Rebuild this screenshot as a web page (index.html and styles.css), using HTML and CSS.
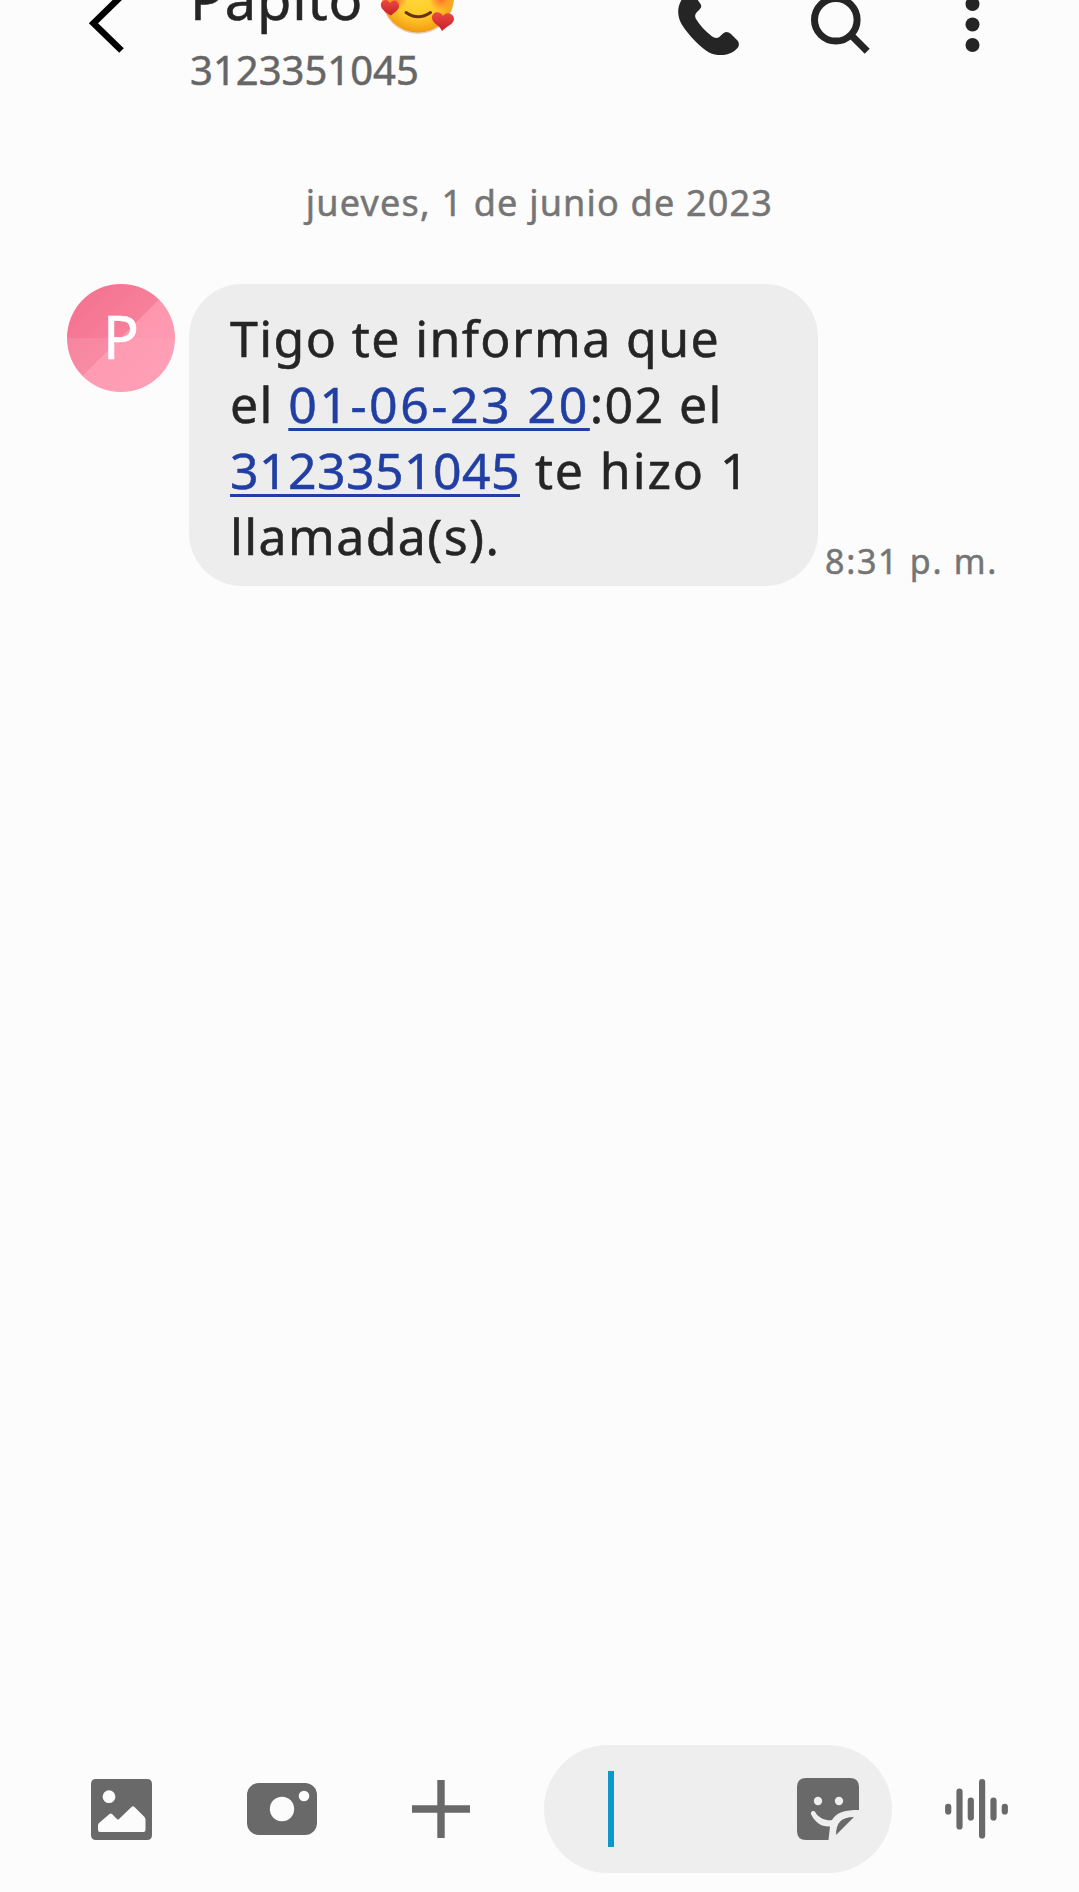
FILE: index.html
```
<!DOCTYPE html>
<html lang="es">
<head>
    <meta charset="UTF-8">
    <meta name="viewport" content="width=device-width, initial-scale=1.0">
    <title>Mensajes</title>
    <link rel="stylesheet" href="styles.css">
</head>
<body>
    <div class="app">
        <header class="header">
            <svg class="back" width="60" height="60" viewBox="80 0 60 60"><path d="M127-9.5 93.5 23.300 121.500 50.500" fill="none" stroke="#000" stroke-width="6.5"/></svg>
            <div class="contact">
                <div class="name">
                    <span>Papito</span>
                    <svg class="emoji" width="78" height="80" viewBox="379 -44 78 80">
                        <defs>
                            <radialGradient id="face" cx=".5" cy=".42" r=".58">
                                <stop offset="0" stop-color="#ffdc3e"/>
                                <stop offset=".65" stop-color="#ffc929"/>
                                <stop offset="1" stop-color="#f39a12"/>
                            </radialGradient>
                            <radialGradient id="blush">
                                <stop offset="0" stop-color="#ff6f2c"/>
                                <stop offset="1" stop-color="#ff6f2c" stop-opacity="0"/>
                            </radialGradient>
                            <linearGradient id="heart" x2="0" y2="1">
                                <stop offset="0" stop-color="#ee4841"/>
                                <stop offset="1" stop-color="#c5202a"/>
                            </linearGradient>
                        </defs>
                        <circle cx="418" cy="-2" r="36" fill="#a8682b" opacity=".3"/>
                        <circle cx="418" cy="-3.500" r="36" fill="url(#face)"/>
                        <circle cx="396" cy="-1" r="11" fill="url(#blush)"/>
                        <circle cx="441" cy="-1" r="12" fill="url(#blush)"/>
                        <path d="M406 12.5Q418 21 430.500 12.500" fill="none" stroke="#66320f" stroke-width="3" stroke-linecap="round"/>
                        <path d="M391 15.500C384 12 380 8 381 3.500C382-.5 388-1.500 390 3C393-1 399 1 399 6C399 10 395 12 391 15.500Z" fill="url(#heart)"/>
                        <path d="M442 31C440 25 432 24 432 17.500C432 11.500 440 10 443 16C446 11 454 13 454 19C454 24 447 26 442 31Z" fill="url(#heart)"/>
                    </svg>
                </div>
                <div class="phone">3123351045</div>
            </div>
            <svg class="call" width="80" height="60" viewBox="670 0 80 60"><path d="M682-1C677 7 677 16 681.500 24C689 36 699 46 709 52.500C719 57 730 55.500 736.500 49C739.500 46 739.500 43 737.500 40.500L731 34C728 31.200 725 31.200 722.500 34L719 37.200C717 38.500 714 38 711.500 36C705.500 31.500 700 25.500 696 19C694.500 16.500 695 14 697 12L700 9C702 7 701.500 5 699.500 2.500L697-1Z" fill="#252525"/></svg>
            <svg class="search" width="80" height="60" viewBox="800 0 80 60"><g fill="none" stroke="#252525" stroke-width="7"><circle cx="835.800" cy="19.800" r="21.300"/><path d="M851.500 35.500 867.200 51.200"/></g></svg>
            <svg class="more" width="25" height="60" viewBox="960 0 25 60"><g fill="#252525"><circle cx="972.500" cy="4" r="7"/><circle cx="972.500" cy="24.500" r="7"/><circle cx="972.500" cy="45" r="7"/></g></svg>
        </header>

        <main class="chat">
            <div class="date">jueves, 1 de junio de 2023</div>
            <div class="message">
                <div class="avatar">P</div>
                <div class="bubble">
                    <div class="line l1">Tigo te informa que</div>
                    <div class="line l2">el <a href="javascript:;" class="fecha">01-06-23 20</a>:02 el</div>
                    <div class="line l3"><a href="javascript:;" class="numero">3123351045</a> te hizo 1</div>
                    <div class="line l4">llamada(s).</div>
                </div>
                <div class="time">8:31 p. m.</div>
            </div>
        </main>

        <footer class="compose">
            <svg class="gallery" width="61" height="61" viewBox="0 0 61 61">
                <path fill="#696969" fill-rule="evenodd" d="M5 0H56Q61 0 61 5V56Q61 61 56 61H5Q0 61 0 56V5Q0 0 5 0ZM18 11.300A6.400 6.400 0 1 0 18 24.100A6.400 6.400 0 1 0 18 11.300ZM7 46.500Q7 45 8 44L18.500 35Q19.700 34 21 35L26 40Q27 41 28 40L40.500 28Q42 26.500 43.500 28L53.500 38Q54.500 39 54.500 40.500V51Q54.500 53 52.500 53H9Q7 53 7 51Z"/>
            </svg>
            <svg class="camera" width="70" height="52" viewBox="0 0 70 52">
                <rect width="70" height="52" rx="12" fill="#696969"/>
                <circle cx="35" cy="26" r="12.200" fill="#fcfcfc"/>
                <circle cx="57" cy="13" r="5.300" fill="#fcfcfc"/>
            </svg>
            <svg class="plus" width="58" height="58" viewBox="0 0 58 58"><path d="M0 29H58M29 0V58" stroke="#696969" stroke-width="7.400"/></svg>
            <div class="input">
                <span class="cursor"></span>
                <svg class="sticker" width="62" height="62" viewBox="0 0 62 62">
                    <path d="M9 0H53Q62 0 62 9V32C48 32 40 34 35 42C31 43 22 41 18.500 34.500C16.500 31 12.500 34 14.500 37C18 44 24 49 33 48.500L31.500 62H9Q0 62 0 53V9Q0 0 9 0Z" fill="#696969"/>
                    <path d="M57 39 39 57C39 45 44 39 57 39Z" fill="#696969"/>
                    <circle cx="21" cy="23" r="4.200" fill="#eee"/>
                    <circle cx="42" cy="23" r="4.200" fill="#eee"/>
                </svg>
            </div>
            <svg class="voice" width="63" height="60" viewBox="0 0 63 60"><path d="M3.200 27.800V32.500M14.500 12.500V47.500M25.800 21.500V38.500M37.100 3.200V56.500M48.500 21.500V38.500M59.800 27.800V32.500" stroke="#696969" stroke-width="6.200" stroke-linecap="round"/></svg>
        </footer>
    </div>
</body>
</html>
```

FILE: styles.css
```
*{
    margin: 0;
    padding: 0;
    box-sizing: border-box;
}
body{
    background: #fcfcfc;
    color: #252525;
    font-family: "Noto Sans", sans-serif;
    -webkit-text-stroke: .5px;
    overflow: hidden;
}
svg{
    display: block;
    flex-shrink: 0;
}
.app{
    width: 1079px;
    height: 1892px;
    display: flex;
    flex-direction: column;
}
/* header */
.header{
    height: 100px;
    padding-left: 80px;
    display: flex;
    align-items: flex-start;
    overflow: hidden;
}
.contact{
    width: 480px;
    margin-left: 50px;
}
.name{
    display: flex;
    align-items: flex-end;
    height: 40px;
    margin-top: -22px;
    font-size: 56px;
    line-height: 40px;
    letter-spacing: .8px;
}
.name span{
    width: 189px;
}
.emoji{
    margin-bottom: -18px;
}
.phone{
    margin-top: 32px;
    font-size: 40px;
    line-height: 40px;
    color: #666;
}
.search{
    margin-left: 50px;
}
.more{
    margin-left: 80px;
}
/* messages */
.chat{
    flex: 1;
    padding-top: 83px;
}
.date{
    text-align: center;
    font-size: 36px;
    line-height: 40px;
    letter-spacing: 1.2px;
    color: #757575;
}
.message{
    display: flex;
    margin: 61px 0 0 67px;
}
.avatar{
    width: 108px;
    height: 108px;
    border-radius: 50%;
    color: #fff;
    font-size: 60px;
    line-height: 104px;
    text-align: center;
    background: linear-gradient(rgba(255, 255, 255, 0) 50%, rgba(255, 170, 190, .25) 50%), linear-gradient(135deg, #f36f8d, #f7809b 50%, #ff96ae 50%, #ff9db5);
}
.bubble{
    width: 629px;
    height: 302px;
    margin-left: 14px;
    padding: 21px 0 0 41px;
    border-radius: 53px;
    background: #ededed;
}
.line{
    font-size: 50px;
    line-height: 66px;
    letter-spacing: 1.4px;
    white-space: nowrap;
}
.l3{
    letter-spacing: 1.9px;
}
.line a{
    color: #213fa3;
    text-decoration: underline;
    text-decoration-thickness: 3px;
    text-underline-offset: 5px;
    text-decoration-skip-ink: none;
}
.line .fecha{
    letter-spacing: 2.5px;
}
.line .numero{
    letter-spacing: .4px;
}
.time{
    align-self: flex-end;
    margin: 0 0 5px 7px;
    font-size: 34px;
    line-height: 40px;
    letter-spacing: 1.7px;
    color: #757575;
}
/* bottom bar */
.compose{
    height: 147px;
    padding: 0 0 19px 91px;
    display: flex;
    align-items: center;
}
.camera{
    margin-left: 95px;
}
.plus{
    margin-left: 95px;
}
.input{
    width: 348px;
    height: 128px;
    margin-left: 74px;
    padding: 0 33px 0 64px;
    border-radius: 64px;
    background: #eee;
    display: flex;
    align-items: center;
    justify-content: space-between;
}
.cursor{
    width: 6px;
    height: 76px;
    background: #0e97cb;
}
.voice{
    margin-left: 53px;
}
```
